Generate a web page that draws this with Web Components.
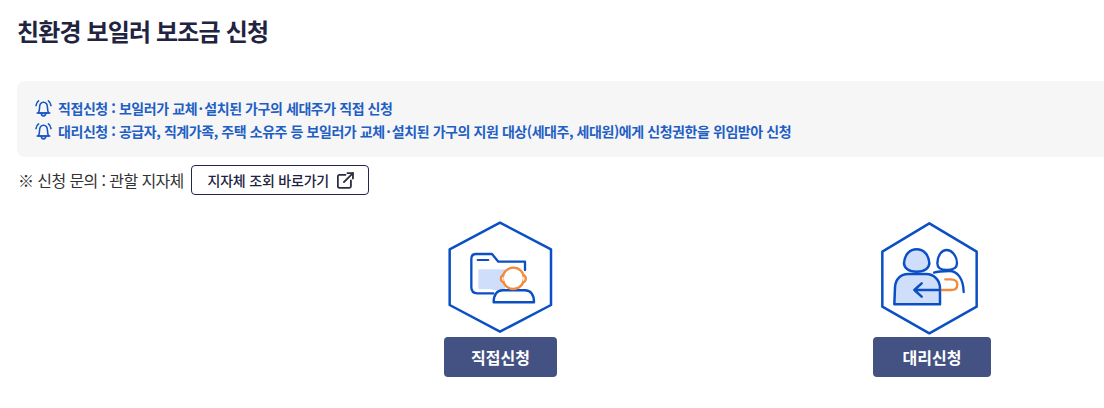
<!DOCTYPE html>
<html lang="ko">
<head>
<meta charset="utf-8">
<title>친환경 보일러 보조금 신청</title>
<style>
  html, body { margin: 0; background: #fff; overflow: hidden; }
  body { font-family: "Noto Sans CJK KR", "Noto Sans", sans-serif; }
  .dot { margin: 0 1.5px; }
</style>
</head>
<body>
<subsidy-page>
  <page-title>친환경 보일러 보조금 신청</page-title>
  <notice-box>
    <notice-line>직접신청 : 보일러가 교체<span class="dot">·</span>설치된 가구의 세대주가 직접 신청</notice-line>
    <notice-line>대리신청 : 공급자, 직계가족, 주택 소유주 등 보일러가 교체<span class="dot">·</span>설치된 가구의 지원 대상(세대주, 세대원)에게 신청권한을 위임받아 신청</notice-line>
  </notice-box>
  <inquiry-row>
    ※ 신청 문의 : 관할 지자체
    <link-button slot="action">지자체 조회 바로가기</link-button>
  </inquiry-row>
  <apply-list>
    <apply-card kind="direct" label="직접신청"></apply-card>
    <apply-card kind="proxy" label="대리신청"></apply-card>
  </apply-list>
</subsidy-page>

<script>
class SubsidyPage extends HTMLElement {
  constructor() {
    super();
    this.attachShadow({ mode: "open" });
    this.shadowRoot.innerHTML = `
      <style>
        :host { display: block; width: 1104px; height: 408px; overflow: hidden; padding: 0 0 0 17px; box-sizing: border-box; }
      </style>
      <slot></slot>
    `;
  }
}

class PageTitle extends HTMLElement {
  constructor() {
    super();
    this.attachShadow({ mode: "open" });
    this.shadowRoot.innerHTML = `
      <style>
        :host { display: block; height: 81px; padding: 13px 0 0 0; box-sizing: border-box; font-size: 24px; line-height: 36px; font-weight: 700; color: #22243f; letter-spacing: -0.85px; }
      </style>
      <slot></slot>
    `;
  }
}

class NoticeBox extends HTMLElement {
  constructor() {
    super();
    this.attachShadow({ mode: "open" });
    this.shadowRoot.innerHTML = `
      <style>
        :host { display: flex; flex-direction: column; justify-content: center; gap: 2px; width: 1110px; height: 76px; padding: 1px 0 0 18px; box-sizing: border-box; background: #f6f6f7; border-radius: 8px; }
      </style>
      <slot></slot>
    `;
  }
}

class NoticeLine extends HTMLElement {
  constructor() {
    super();
    this.attachShadow({ mode: "open" });
    this.shadowRoot.innerHTML = `
      <style>
        :host { display: flex; align-items: center; gap: 6px; height: 21px; font-size: 14px; font-weight: 700; color: #1f5fc4; letter-spacing: -0.43px; white-space: nowrap; }
        svg { flex: none; }
      </style>
      <svg width="17" height="18" viewBox="0 0 17 18" fill="none" stroke="#1a56c0" stroke-width="1.600" stroke-linecap="round" stroke-linejoin="round">
        <path d="M3.200 14c1.100-1.400 1.300-2.800 1.300-5 0-3.400 1.400-5.800 4-5.800s4 2.400 4 5.800c0 2.200.2 3.600 1.300 5z"/>
        <path d="M2.200 14h12.600"/>
        <path d="M6.300 14.200c0 3.500 4.400 3.500 4.400 0"/>
        <path d="M1 6.600c.2-2.100 1-3.600 2.600-4.700"/>
        <path d="M16 6.600c-.2-2.100-1-3.600-2.600-4.700"/>
      </svg>
      <span><slot></slot></span>
    `;
  }
}

class InquiryRow extends HTMLElement {
  constructor() {
    super();
    this.attachShadow({ mode: "open" });
    this.shadowRoot.innerHTML = `
      <style>
        :host { display: flex; align-items: center; gap: 7px; height: 30px; margin-top: 8px; padding-left: 1px; font-size: 16px; color: #333; letter-spacing: -0.6px; white-space: nowrap; }
      </style>
      <slot></slot>
      <slot name="action"></slot>
    `;
  }
}

class LinkButton extends HTMLElement {
  constructor() {
    super();
    this.attachShadow({ mode: "open" });
    this.shadowRoot.innerHTML = `
      <style>
        :host { display: inline-flex; align-items: center; justify-content: center; gap: 8px; width: 178px; height: 30px; box-sizing: border-box; border: 1px solid #22264f; border-radius: 4px; background: #fff; font-size: 14px; font-weight: 500; color: #22243f; padding-left: 2px; letter-spacing: -0.2px; }
        svg { flex: none; }
      </style>
      <slot></slot>
      <svg width="17" height="17" viewBox="0 0 16 16" fill="none" stroke="#2b2d42" stroke-width="1.700" stroke-linejoin="round" stroke-linecap="round">
        <path d="M8 2.700H2.300a1.500 1.500 0 0 0-1.500 1.500v9.300a1.500 1.500 0 0 0 1.500 1.500h9.300a1.500 1.500 0 0 0 1.500-1.500V8"/>
        <path d="M6.500 9.500L15 1"/>
        <path d="M9.800 1H15v5.200"/>
      </svg>
    `;
  }
}

class ApplyList extends HTMLElement {
  constructor() {
    super();
    this.attachShadow({ mode: "open" });
    this.shadowRoot.innerHTML = `
      <style>
        :host { display: flex; gap: 316px; margin-top: 25px; padding-left: 427px; }
      </style>
      <slot></slot>
    `;
  }
}

// icons are written in 3x units, taken straight from the zoomed crops
const APPLY_ICONS = {
  direct: `
    <svg width="113" height="116" viewBox="42 30 339 348" fill="none" stroke-linecap="round" stroke-linejoin="round">
      <path d="M210 38L363 118V285L210 365L59 285V118Z" stroke="#0b4fc4" stroke-width="7.500"/>
      <path d="M145 178H225V240H190L185 238H145Z" fill="#cfdffb"/>
      <path d="M190 250H142Q124 250 124 232V146Q124 132 138 132H186L205 155H285V180" stroke="#0b4fc4" stroke-width="7"/>
      <path d="M143 150H175" stroke="#0b4fc4" stroke-width="6.500"/>
      <path d="M191 277H312C312 255 302 241 285 241H218C201 241 191 255 191 277Z" fill="#fff" stroke="#0b4fc4" stroke-width="7.500"/>
      <circle cx="250" cy="205" r="32" fill="#fff" stroke="#f28a3c" stroke-width="7"/>
      <path d="M220 196C210 198 210 214 221 217M280 196C290 198 290 214 279 217" fill="#fff" stroke="#f28a3c" stroke-width="7"/>
    </svg>`,
  proxy: `
    <svg width="118" height="116" viewBox="39 30 354 348" fill="none" stroke-linecap="round" stroke-linejoin="round">
      <path d="M208 40L350 125V290L208 370L67 290V125Z" stroke="#0b4fc4" stroke-width="7.500"/>
      <path d="M232 160C232 136 246 120 260 120S291 136 291 160C291 172 280 180 260 180S232 172 232 160Z" stroke="#0b4fc4" stroke-width="7"/>
      <path d="M222 188C235 183 250 183 268 183C292 183 310 205 311 246" stroke="#0b4fc4" stroke-width="7"/>
      <path d="M103 283L105 232C106 208 122 192 145 192H198C222 192 240 210 240 235V283Z" fill="#cfdffb" stroke="#0b4fc4" stroke-width="7.500"/>
      <path d="M132 160C134 132 150 118 170 118S206 132 208 160C208 174 194 185 170 185S132 174 132 160Z" fill="#cfdffb" stroke="#0b4fc4" stroke-width="7.500"/>
      <path d="M240 240H272C284 240 292 234 292 224S284 208 272 208H256" stroke="#f28a3c" stroke-width="7"/>
      <path d="M240 240H164M185 220L163 240L185 260" stroke="#0b4fc4" stroke-width="7.500"/>
    </svg>`
};

class ApplyCard extends HTMLElement {
  constructor() {
    super();
    this.attachShadow({ mode: "open" });
  }

  connectedCallback() {
    const kind = this.getAttribute("kind");
    const label = this.getAttribute("label");
    const wide = kind === "proxy";
    this.shadowRoot.innerHTML = `
      <style>
        :host { display: flex; flex-direction: column; width: ${wide ? 118 : 113}px; }
        svg { display: block; margin-bottom: 1px; }
        button { display: block; width: 100%; height: 40px; padding: 0; border: 0; border-radius: 4px; background: #435283; color: #fff; font: 700 16px "Noto Sans CJK KR", "Noto Sans", sans-serif; }
      </style>
      ${APPLY_ICONS[kind]}
      <button type="button">${label}</button>
    `;
  }
}

customElements.define("subsidy-page", SubsidyPage);
customElements.define("page-title", PageTitle);
customElements.define("notice-box", NoticeBox);
customElements.define("notice-line", NoticeLine);
customElements.define("inquiry-row", InquiryRow);
customElements.define("link-button", LinkButton);
customElements.define("apply-list", ApplyList);
customElements.define("apply-card", ApplyCard);
</script>
</body>
</html>
